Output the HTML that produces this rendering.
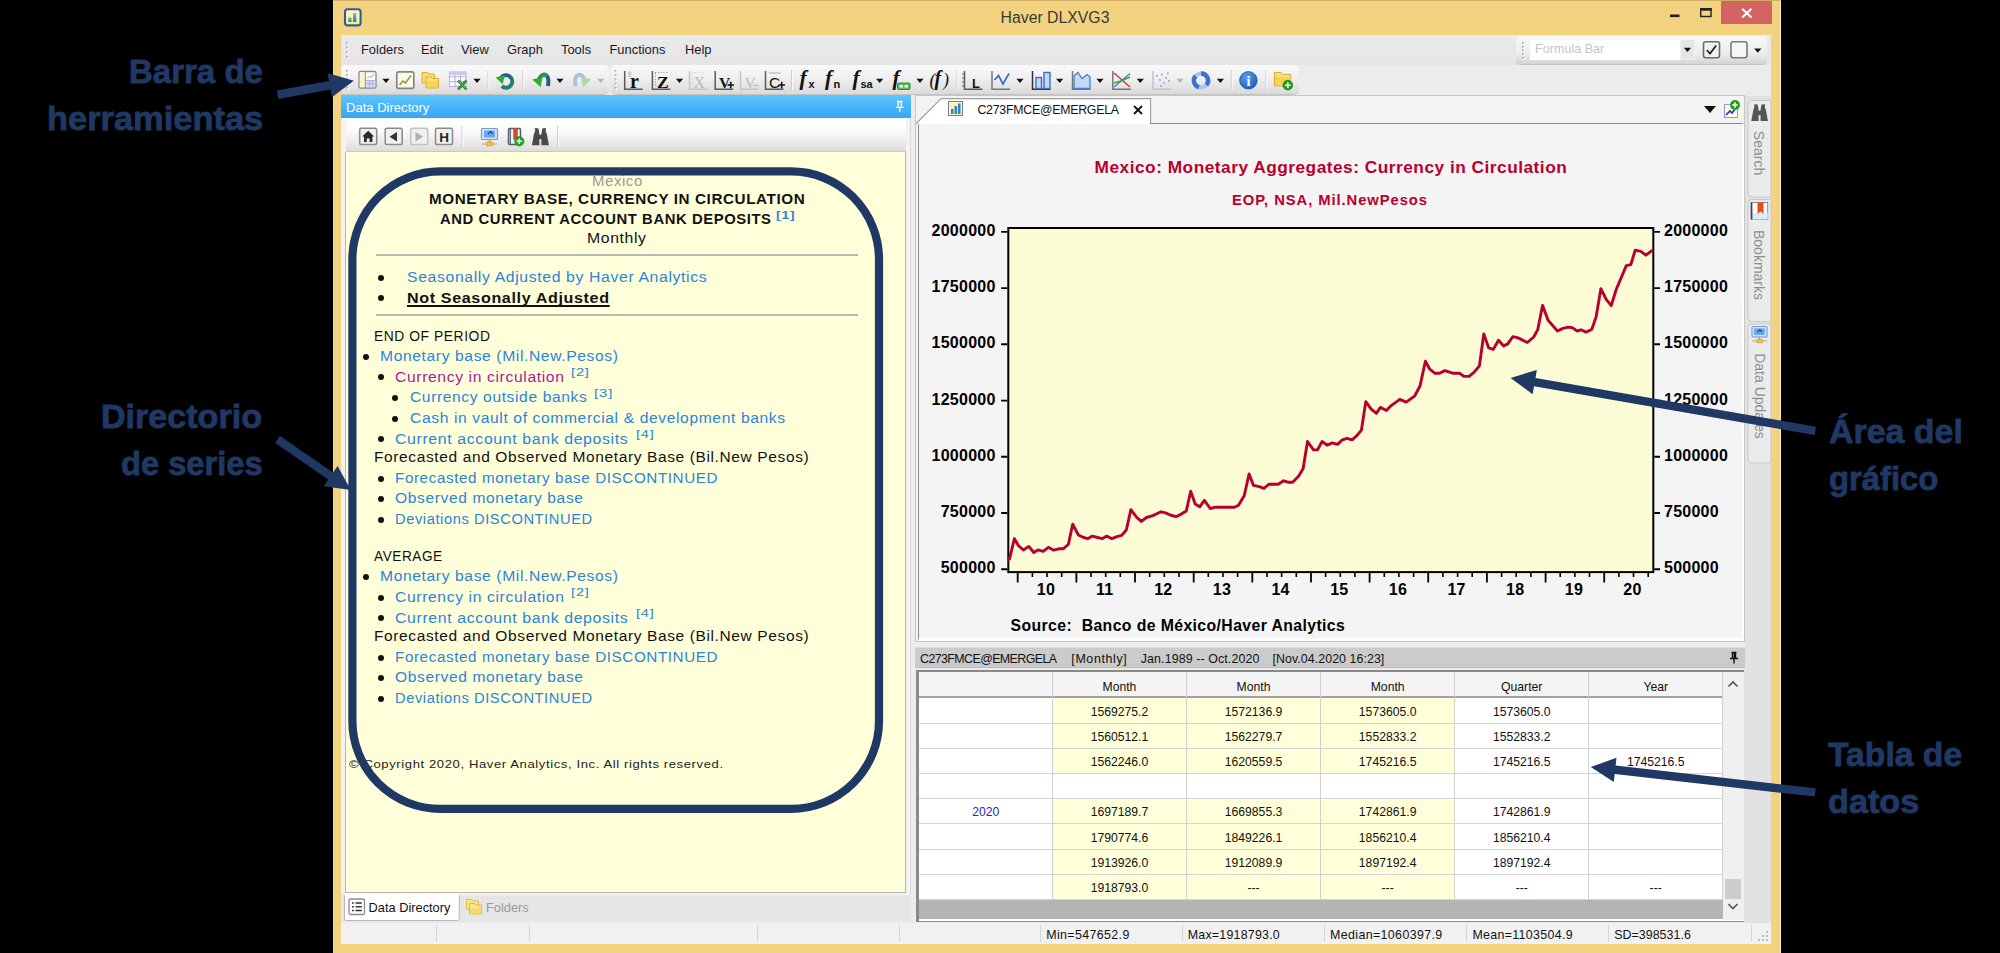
<!DOCTYPE html>
<html>
<head>
<meta charset="utf-8">
<title>Haver DLXVG3</title>
<style>
:root{ --margin:#000000; --navy:#1f3864; --win:#f3d37f; }
*{box-sizing:border-box;margin:0;padding:0}
html,body{width:2000px;height:953px;overflow:hidden;background:var(--margin);}
body{font-family:"Liberation Sans",sans-serif;font-size:12.5px;color:#000;position:relative}
.abs{position:absolute}
.t{position:absolute;white-space:nowrap;line-height:1}
/* window */
#win{left:332.8px;top:0;width:1448px;height:953px;background:var(--win);border-top:1px solid #cfb066;border-right:1.2px solid #f6e9c4;border-left:1px solid #f7dc8c}
#client{left:340.8px;top:35.3px;width:1430.4px;height:908.4px;background:#ececec;}
#title{left:333px;top:0;width:1448px;height:36px}
#title .cap{left:0;width:1448px;top:10.2px;text-align:center;font-size:15.8px;color:#3a3a3a;padding-right:4px}
#closebtn{left:1720.7px;top:1px;width:51.4px;height:22.8px;background:#d46363}
/* menu */
#menubar{left:340.8px;top:35.3px;width:1430.4px;height:29.7px;background:linear-gradient(#ebebeb,#e4e4e4)}
.menu{top:43.6px;font-size:12.9px;color:#1a1a1a}
/* toolbar */
.tb{background:linear-gradient(#fafafa 0%,#f0f0f0 45%,#dadada 100%);border-bottom:1px solid #c4c4c4}
#tb1{left:341px;top:65px;width:268px;height:30px;border-radius:0 5px 5px 0}
#tb2{left:611px;top:65px;width:688px;height:30px;border-radius:5px}
#fbar{left:1516px;top:36px;width:251px;height:29px;border-radius:5px;background:linear-gradient(#f8f8f8 0%,#eeeeee 60%,#d4d4d4 100%);border-bottom:1px solid #c0c0c0}
#finput{left:1530px;top:40px;width:165px;height:20px;background:#fff}
/* left panel */
#ddhead{left:341px;top:95px;width:570px;height:23px;background:linear-gradient(#5cc6fb 0%,#49b4f8 50%,#3da5f2 100%)}
#ddhead .t{left:5px;top:5.6px;color:#fff;font-size:13.05px}
#ddtool{left:346px;top:119px;width:560px;height:33px;background:linear-gradient(#ffffff 0%,#fafafa 40%,#dcdcdc 100%);border-bottom:1px solid #c8c8c8}
#ddbody{left:345px;top:152px;width:560.6px;height:741px;background:#ffffd9;border-left:1.2px solid #b6b6b6;border-right:1.4px solid #b6b6b6;border-bottom:1.6px solid #b6b6b6}
#ddframe{left:341px;top:118px;width:570px;height:777px;background:#f2f2f2;border-right:1.6px solid #dadada}
#ddtabs{left:341px;top:895px;width:570px;height:27px;background:#e6e6e6}
/* status */
#status{left:341px;top:923px;width:1430px;height:21px;background:#f1f1f1}
.ssep{top:925px;width:1px;height:17px;background:#d6d6d6}
.stxt{top:929px;font-size:12.4px;color:#111}

.ct{color:#b8002e;font-weight:bold}
.yl{font-weight:bold;font-size:16px;color:#000;letter-spacing:.25px}
.cell{text-align:center;font-size:12.2px;color:#111}
.lp{letter-spacing:0.55px;transform-origin:0 50%}
.bul{width:6px;height:6px;border-radius:50%;background:#111}
.an{font-size:33.6px;font-weight:700;color:#1f3864;transform-origin:0 50%;-webkit-text-stroke:0.85px #1f3864}
.vt{font-size:14px;color:#8e8e8e;transform:rotate(90deg);transform-origin:50% 50%;text-align:center}
</style>
</head>
<body>
<div id="win" class="abs"></div>
<div id="title" class="abs"><div class="t cap">Haver DLXVG3</div></div>
<div id="closebtn" class="abs"></div>
<div id="client" class="abs"></div>
<div id="menubar" class="abs"></div>
<div class="t menu" style="left:361px">Folders</div>
<div class="t menu" style="left:421px">Edit</div>
<div class="t menu" style="left:461px">View</div>
<div class="t menu" style="left:507px">Graph</div>
<div class="t menu" style="left:561px">Tools</div>
<div class="t menu" style="left:609.5px">Functions</div>
<div class="t menu" style="left:685px">Help</div>
<div id="tb1" class="abs tb"></div>
<div id="tb2" class="abs tb"></div>
<div id="fbar" class="abs"></div>
<div id="finput" class="abs"></div>
<div class="t" style="left:1535px;top:43px;font-size:12.6px;color:#c9c4c6">Formula Bar</div>

<div id="ddframe" class="abs"></div>
<div id="ddhead" class="abs"><div class="t">Data Directory</div></div>
<div id="ddtool" class="abs"></div>
<div id="ddbody" class="abs"></div>
<!--LEFT-->
<div class="t lp" style="left:591.6px;top:173.7px;font-size:14px;font-weight:400;color:#9a9a9a;transform:scaleX(1.0657);">Mexico</div>
<div class="t lp" style="left:428.9px;top:191.9px;font-size:14px;font-weight:700;color:#111111;transform:scaleX(1.0875);">MONETARY BASE, CURRENCY IN CIRCULATION</div>
<div class="t lp" style="left:439.5px;top:212.3px;font-size:14px;font-weight:700;color:#111111;transform:scaleX(1.0587);">AND CURRENT ACCOUNT BANK DEPOSITS</div>
<div class="t lp" style="left:586.5px;top:231.2px;font-size:14px;font-weight:400;color:#111111;transform:scaleX(1.1276);">Monthly</div>
<div class="t lp" style="left:407.0px;top:270.1px;font-size:14px;font-weight:400;color:#2b84dc;transform:scaleX(1.1285);">Seasonally Adjusted by Haver Analytics</div>
<div class="t lp" style="left:407.0px;top:290.5px;font-size:14px;font-weight:700;color:#111111;transform:scaleX(1.1495);text-decoration:underline;text-underline-offset:2px;text-decoration-thickness:1.5px;text-decoration-skip-ink:none;">Not Seasonally Adjusted</div>
<div class="t lp" style="left:373.5px;top:328.5px;font-size:14px;font-weight:400;color:#111111;transform:scaleX(0.9901);">END OF PERIOD</div>
<div class="t lp" style="left:380.2px;top:349.2px;font-size:14px;font-weight:400;color:#2b84dc;transform:scaleX(1.1168);">Monetary base (Mil.New.Pesos)</div>
<div class="t lp" style="left:395.4px;top:369.6px;font-size:14px;font-weight:400;color:#a61aa0;transform:scaleX(1.1215);">Currency in circulation</div>
<div class="t lp" style="left:410.3px;top:390.3px;font-size:14px;font-weight:400;color:#2b84dc;transform:scaleX(1.1139);">Currency outside banks</div>
<div class="t lp" style="left:410.3px;top:411.0px;font-size:14px;font-weight:400;color:#2b84dc;transform:scaleX(1.1171);">Cash in vault of commercial &amp; development banks</div>
<div class="t lp" style="left:395.4px;top:431.7px;font-size:14px;font-weight:400;color:#2b84dc;transform:scaleX(1.1335);">Current account bank deposits</div>
<div class="t lp" style="left:373.5px;top:449.7px;font-size:14px;font-weight:400;color:#111111;transform:scaleX(1.1089);">Forecasted and Observed Monetary Base (Bil.New Pesos)</div>
<div class="t lp" style="left:395.4px;top:471.0px;font-size:14px;font-weight:400;color:#2b84dc;transform:scaleX(1.0867);">Forecasted monetary base DISCONTINUED</div>
<div class="t lp" style="left:395.4px;top:491.4px;font-size:14px;font-weight:400;color:#2b84dc;transform:scaleX(1.1141);">Observed monetary base</div>
<div class="t lp" style="left:395.4px;top:512.1px;font-size:14px;font-weight:400;color:#2b84dc;transform:scaleX(1.0489);">Deviations DISCONTINUED</div>
<div class="t lp" style="left:373.5px;top:548.9px;font-size:14px;font-weight:400;color:#111111;transform:scaleX(0.9748);">AVERAGE</div>
<div class="t lp" style="left:380.2px;top:569.3px;font-size:14px;font-weight:400;color:#2b84dc;transform:scaleX(1.1168);">Monetary base (Mil.New.Pesos)</div>
<div class="t lp" style="left:395.4px;top:590.0px;font-size:14px;font-weight:400;color:#2b84dc;transform:scaleX(1.1215);">Currency in circulation</div>
<div class="t lp" style="left:395.4px;top:610.7px;font-size:14px;font-weight:400;color:#2b84dc;transform:scaleX(1.1335);">Current account bank deposits</div>
<div class="t lp" style="left:373.5px;top:629.2px;font-size:14px;font-weight:400;color:#111111;transform:scaleX(1.1089);">Forecasted and Observed Monetary Base (Bil.New Pesos)</div>
<div class="t lp" style="left:395.4px;top:649.9px;font-size:14px;font-weight:400;color:#2b84dc;transform:scaleX(1.0867);">Forecasted monetary base DISCONTINUED</div>
<div class="t lp" style="left:395.4px;top:670.3px;font-size:14px;font-weight:400;color:#2b84dc;transform:scaleX(1.1141);">Observed monetary base</div>
<div class="t lp" style="left:395.4px;top:691.0px;font-size:14px;font-weight:400;color:#2b84dc;transform:scaleX(1.0489);">Deviations DISCONTINUED</div>
<div class="t lp" style="left:349.0px;top:758.7px;font-size:11.8px;font-weight:400;color:#222;transform:scaleX(1.1060);">© Copyright 2020, Haver Analytics, Inc. All rights reserved.</div>
<div class="t lp" style="left:776.0px;top:209.8px;font-size:10.5px;font-weight:700;letter-spacing:.6px;color:#2b84dc;transform:scaleX(1.3176)">[1]</div>
<div class="t lp" style="left:571.3px;top:367.0px;font-size:10.5px;font-weight:400;letter-spacing:.6px;color:#2b84dc;transform:scaleX(1.3893)">[2]</div>
<div class="t lp" style="left:594.0px;top:387.7px;font-size:10.5px;font-weight:400;letter-spacing:.6px;color:#2b84dc;transform:scaleX(1.4203)">[3]</div>
<div class="t lp" style="left:635.6px;top:429.1px;font-size:10.5px;font-weight:400;letter-spacing:.6px;color:#2b84dc;transform:scaleX(1.3815)">[4]</div>
<div class="t lp" style="left:571.3px;top:587.4px;font-size:10.5px;font-weight:400;letter-spacing:.6px;color:#2b84dc;transform:scaleX(1.3893)">[2]</div>
<div class="t lp" style="left:635.6px;top:608.1px;font-size:10.5px;font-weight:400;letter-spacing:.6px;color:#2b84dc;transform:scaleX(1.3815)">[4]</div>
<div class="abs bul" style="left:378.0px;top:274.6px"></div>
<div class="abs bul" style="left:378.0px;top:295.2px"></div>
<div class="abs bul" style="left:362.9px;top:353.8px"></div>
<div class="abs bul" style="left:378.1px;top:374.2px"></div>
<div class="abs bul" style="left:392.4px;top:394.9px"></div>
<div class="abs bul" style="left:392.4px;top:415.6px"></div>
<div class="abs bul" style="left:378.1px;top:436.3px"></div>
<div class="abs bul" style="left:378.1px;top:475.6px"></div>
<div class="abs bul" style="left:378.1px;top:496.0px"></div>
<div class="abs bul" style="left:378.1px;top:516.7px"></div>
<div class="abs bul" style="left:362.9px;top:573.9px"></div>
<div class="abs bul" style="left:378.1px;top:594.6px"></div>
<div class="abs bul" style="left:378.1px;top:615.3px"></div>
<div class="abs bul" style="left:378.1px;top:654.5px"></div>
<div class="abs bul" style="left:378.1px;top:674.9px"></div>
<div class="abs bul" style="left:378.1px;top:695.6px"></div>
<div class="abs" style="left:375.6px;top:254.2px;width:482.2px;height:2px;background:#b7b7b3"></div>
<div class="abs" style="left:375.6px;top:313.9px;width:482.2px;height:2px;background:#b7b7b3"></div>
<!--/LEFT-->
<div id="ddtabs" class="abs"></div>

<div id="status" class="abs"></div>
<!--STATUS-->
<div class="abs ssep" style="left:436.0px"></div>
<div class="abs ssep" style="left:528.6px"></div>
<div class="abs ssep" style="left:756.5px"></div>
<div class="abs ssep" style="left:898.6px"></div>
<div class="abs ssep" style="left:1040.4px"></div>
<div class="abs ssep" style="left:1182.2px"></div>
<div class="abs ssep" style="left:1324.0px"></div>
<div class="abs ssep" style="left:1466.0px"></div>
<div class="abs ssep" style="left:1608.0px"></div>
<div class="abs ssep" style="left:1750.7px"></div>
<div class="t " style="left:1046.2px;top:928.7px;font-size:12.4px;font-weight:400;color:#111;letter-spacing:0.383px">Min=547652.9</div>
<div class="t " style="left:1187.8px;top:928.7px;font-size:12.4px;font-weight:400;color:#111;letter-spacing:0.223px">Max=1918793.0</div>
<div class="t " style="left:1330.0px;top:928.7px;font-size:12.4px;font-weight:400;color:#111;letter-spacing:0.383px">Median=1060397.9</div>
<div class="t " style="left:1472.4px;top:928.7px;font-size:12.4px;font-weight:400;color:#111;letter-spacing:0.331px">Mean=1103504.9</div>
<div class="t " style="left:1614.2px;top:928.7px;font-size:12.4px;font-weight:400;color:#111;letter-spacing:0.046px">SD=398531.6</div>
<!--/STATUS-->
<!--RIGHT-->
<div class="abs" style="left:915.4px;top:94.8px;width:829.6px;height:547.4px;background:#f3f3f3;border:1px solid #c6c6c6"></div>
<div class="abs" style="left:917.6px;top:122.7px;width:826.2px;height:518.3px;background:#f4f4f4;border-top:1.7px solid #8a8a8a;border-left:1.6px solid #8a8a8a;border-right:2px solid #fdfdfd;border-bottom:3.2px solid #fdfdfd"></div>
<svg class="abs" style="left:0;top:0" width="2000" height="953" viewBox="0 0 2000 953">
<path d="M916.8 123 L941 98.6 L1150.6 98.6 L1150.6 123 Z" fill="#ffffff" stroke="#9f9f9f" stroke-width="1.1"/>
<rect x="918.2" y="122" width="231.8" height="2.4" fill="#ffffff"/>
<rect x="948.5" y="101.5" width="14" height="14" fill="#fdf6b0" stroke="#6b7fa8" stroke-width="1"/>
<rect x="951" y="109" width="2.5" height="5" fill="#2f7fd0"/><rect x="954.5" y="106" width="2.5" height="8" fill="#2f7fd0"/><rect x="958" y="103.5" width="2.5" height="10.5" fill="#2f7fd0"/>
<path d="M1134 106 L1142 114 M1142 106 L1134 114" stroke="#111" stroke-width="1.8" fill="none"/>
<path d="M1704 106 L1716 106 L1710 113 Z" fill="#111"/>
<rect x="1724.5" y="104.5" width="13" height="13" fill="#fbfbe8" stroke="#8aa0c8" stroke-width="1"/>
<path d="M1726 115 L1730 111 L1732 113 L1736 108" stroke="#3a22c0" stroke-width="1.6" fill="none"/>
<circle cx="1735" cy="105" r="5" fill="#1fa11f"/><path d="M1732.3 105 H1737.7 M1735 102.3 V107.7" stroke="#fff" stroke-width="1.5"/>
<rect x="1008.3" y="228" width="645" height="344.1" fill="#fbfbd6" stroke="#000" stroke-width="2"/>
<path d="M1001.2 231.9 H1007.3 M1654.3 231.9 H1660 " stroke="#000" stroke-width="1.9"/>
<path d="M1001.2 288.1 H1007.3 M1654.3 288.1 H1660 " stroke="#000" stroke-width="1.9"/>
<path d="M1001.2 344.3 H1007.3 M1654.3 344.3 H1660 " stroke="#000" stroke-width="1.9"/>
<path d="M1001.2 400.6 H1007.3 M1654.3 400.6 H1660 " stroke="#000" stroke-width="1.9"/>
<path d="M1001.2 456.8 H1007.3 M1654.3 456.8 H1660 " stroke="#000" stroke-width="1.9"/>
<path d="M1001.2 513.0 H1007.3 M1654.3 513.0 H1660 " stroke="#000" stroke-width="1.9"/>
<path d="M1001.2 569.2 H1007.3 M1654.3 569.2 H1660 " stroke="#000" stroke-width="1.9"/>
<path d="M1017.7 573 V582.5" stroke="#000" stroke-width="1.8"/>
<path d="M1032.4 573 V577" stroke="#000" stroke-width="1.6"/>
<path d="M1047.0 573 V577" stroke="#000" stroke-width="1.6"/>
<path d="M1061.7 573 V577" stroke="#000" stroke-width="1.6"/>
<path d="M1076.4 573 V582.5" stroke="#000" stroke-width="1.8"/>
<path d="M1091.0 573 V577" stroke="#000" stroke-width="1.6"/>
<path d="M1105.7 573 V577" stroke="#000" stroke-width="1.6"/>
<path d="M1120.3 573 V577" stroke="#000" stroke-width="1.6"/>
<path d="M1135.0 573 V582.5" stroke="#000" stroke-width="1.8"/>
<path d="M1149.7 573 V577" stroke="#000" stroke-width="1.6"/>
<path d="M1164.3 573 V577" stroke="#000" stroke-width="1.6"/>
<path d="M1179.0 573 V577" stroke="#000" stroke-width="1.6"/>
<path d="M1193.7 573 V582.5" stroke="#000" stroke-width="1.8"/>
<path d="M1208.3 573 V577" stroke="#000" stroke-width="1.6"/>
<path d="M1223.0 573 V577" stroke="#000" stroke-width="1.6"/>
<path d="M1237.6 573 V577" stroke="#000" stroke-width="1.6"/>
<path d="M1252.3 573 V582.5" stroke="#000" stroke-width="1.8"/>
<path d="M1267.0 573 V577" stroke="#000" stroke-width="1.6"/>
<path d="M1281.6 573 V577" stroke="#000" stroke-width="1.6"/>
<path d="M1296.3 573 V577" stroke="#000" stroke-width="1.6"/>
<path d="M1311.0 573 V582.5" stroke="#000" stroke-width="1.8"/>
<path d="M1325.6 573 V577" stroke="#000" stroke-width="1.6"/>
<path d="M1340.3 573 V577" stroke="#000" stroke-width="1.6"/>
<path d="M1354.9 573 V577" stroke="#000" stroke-width="1.6"/>
<path d="M1369.6 573 V582.5" stroke="#000" stroke-width="1.8"/>
<path d="M1384.3 573 V577" stroke="#000" stroke-width="1.6"/>
<path d="M1398.9 573 V577" stroke="#000" stroke-width="1.6"/>
<path d="M1413.6 573 V577" stroke="#000" stroke-width="1.6"/>
<path d="M1428.2 573 V582.5" stroke="#000" stroke-width="1.8"/>
<path d="M1442.9 573 V577" stroke="#000" stroke-width="1.6"/>
<path d="M1457.6 573 V577" stroke="#000" stroke-width="1.6"/>
<path d="M1472.2 573 V577" stroke="#000" stroke-width="1.6"/>
<path d="M1486.9 573 V582.5" stroke="#000" stroke-width="1.8"/>
<path d="M1501.6 573 V577" stroke="#000" stroke-width="1.6"/>
<path d="M1516.2 573 V577" stroke="#000" stroke-width="1.6"/>
<path d="M1530.9 573 V577" stroke="#000" stroke-width="1.6"/>
<path d="M1545.6 573 V582.5" stroke="#000" stroke-width="1.8"/>
<path d="M1560.2 573 V577" stroke="#000" stroke-width="1.6"/>
<path d="M1574.9 573 V577" stroke="#000" stroke-width="1.6"/>
<path d="M1589.5 573 V577" stroke="#000" stroke-width="1.6"/>
<path d="M1604.2 573 V582.5" stroke="#000" stroke-width="1.8"/>
<path d="M1618.9 573 V577" stroke="#000" stroke-width="1.6"/>
<path d="M1633.5 573 V577" stroke="#000" stroke-width="1.6"/>
<path d="M1648.2 573 V577" stroke="#000" stroke-width="1.6"/>
<polyline points="1008.5,559.5 1009.5,558.9 1014.4,538.7 1018.4,545.6 1023.4,550.0 1028.8,546.4 1033.8,552.5 1038.0,549.9 1043.2,551.4 1048.4,547.3 1053.6,550.2 1058.8,548.8 1063.4,548.8 1068.4,544.2 1072.7,524.2 1078.4,535.0 1083.6,537.5 1087.7,538.7 1092.3,536.1 1097.5,537.5 1102.1,538.7 1106.7,536.1 1111.9,538.7 1117.7,536.4 1121.7,535.4 1126.3,530.0 1130.9,509.6 1136.7,517.3 1141.3,521.4 1146.5,517.5 1152.9,515.6 1161.0,511.8 1165.6,512.9 1170.2,515.0 1176.0,516.7 1181.2,514.1 1186.3,511.0 1190.7,491.3 1195.2,503.9 1199.8,506.8 1204.4,500.4 1210.2,508.5 1214.8,507.3 1234.4,507.3 1238.5,505.3 1244.2,495.8 1249.1,473.9 1253.5,485.4 1259.2,486.6 1263.9,488.3 1269.1,484.2 1278.3,484.2 1283.5,480.8 1288.1,482.2 1292.7,482.2 1298.5,476.2 1303.1,468.7 1307.5,441.5 1313.5,449.9 1317.5,449.9 1322.1,441.5 1327.3,445.2 1332.0,442.9 1337.7,444.4 1342.3,439.8 1347.0,438.3 1352.1,439.8 1357.3,435.2 1361.4,430.2 1365.8,401.7 1371.2,409.2 1376.4,413.3 1380.4,407.4 1386.4,410.5 1391.2,405.6 1399.8,399.3 1406.2,402.1 1414.8,395.8 1420.0,386.0 1425.4,361.2 1429.8,369.2 1435.0,373.3 1439.6,373.3 1444.8,370.6 1453.5,373.3 1459.8,373.3 1463.9,376.4 1469.1,376.4 1474.2,372.1 1479.4,365.8 1483.8,334.0 1488.7,347.9 1493.3,349.4 1498.5,340.2 1503.7,345.9 1507.7,343.9 1512.9,336.7 1518.1,337.9 1527.3,342.5 1533.7,337.0 1537.7,329.8 1542.6,305.4 1548.2,320.4 1557.5,331.0 1562.9,328.4 1568.3,327.2 1572.2,327.6 1577.2,331.0 1581.0,329.8 1586.0,332.1 1591.7,329.5 1596.1,316.9 1600.9,288.6 1606.2,299.3 1611.2,305.6 1616.3,289.2 1626.3,265.6 1630.8,264.7 1635.2,250.2 1640.8,251.4 1645.9,255.2 1651.5,250.8" fill="none" stroke="#b8002e" stroke-width="2.9" stroke-linejoin="round" stroke-linecap="round"/>
</svg>
<div class="t " style="left:1094.6px;top:158.8px;font-size:17.3px;font-weight:700;color:#b8002e;letter-spacing:0.497px">Mexico: Monetary Aggregates: Currency in Circulation</div>
<div class="t " style="left:1232.0px;top:193.3px;font-size:14.8px;font-weight:700;color:#b8002e;letter-spacing:0.918px">EOP, NSA, Mil.NewPesos</div>
<div class="t yl" style="left:896px;width:99.6px;text-align:right;top:223.0px">2000000</div>
<div class="t yl" style="left:1664px;top:223.0px">2000000</div>
<div class="t yl" style="left:896px;width:99.6px;text-align:right;top:279.2px">1750000</div>
<div class="t yl" style="left:1664px;top:279.2px">1750000</div>
<div class="t yl" style="left:896px;width:99.6px;text-align:right;top:335.4px">1500000</div>
<div class="t yl" style="left:1664px;top:335.4px">1500000</div>
<div class="t yl" style="left:896px;width:99.6px;text-align:right;top:391.7px">1250000</div>
<div class="t yl" style="left:1664px;top:391.7px">1250000</div>
<div class="t yl" style="left:896px;width:99.6px;text-align:right;top:447.9px">1000000</div>
<div class="t yl" style="left:1664px;top:447.9px">1000000</div>
<div class="t yl" style="left:896px;width:99.6px;text-align:right;top:504.1px">750000</div>
<div class="t yl" style="left:1664px;top:504.1px">750000</div>
<div class="t yl" style="left:896px;width:99.6px;text-align:right;top:560.3px">500000</div>
<div class="t yl" style="left:1664px;top:560.3px">500000</div>
<div class="t yl" style="left:1026.0px;width:40px;text-align:center;top:581.7px">10</div>
<div class="t yl" style="left:1084.7px;width:40px;text-align:center;top:581.7px">11</div>
<div class="t yl" style="left:1143.3px;width:40px;text-align:center;top:581.7px">12</div>
<div class="t yl" style="left:1202.0px;width:40px;text-align:center;top:581.7px">13</div>
<div class="t yl" style="left:1260.6px;width:40px;text-align:center;top:581.7px">14</div>
<div class="t yl" style="left:1319.3px;width:40px;text-align:center;top:581.7px">15</div>
<div class="t yl" style="left:1377.9px;width:40px;text-align:center;top:581.7px">16</div>
<div class="t yl" style="left:1436.6px;width:40px;text-align:center;top:581.7px">17</div>
<div class="t yl" style="left:1495.2px;width:40px;text-align:center;top:581.7px">18</div>
<div class="t yl" style="left:1553.9px;width:40px;text-align:center;top:581.7px">19</div>
<div class="t yl" style="left:1612.5px;width:40px;text-align:center;top:581.7px">20</div>
<div class="t " style="left:1010.5px;top:617.6px;font-size:15.8px;font-weight:700;color:#000;letter-spacing:0.393px">Source:&nbsp; Banco de M&eacute;xico/Haver Analytics</div>
<div class="t " style="left:977.4px;top:104.2px;font-size:12.3px;font-weight:400;color:#111;letter-spacing:-0.216px">C273FMCE@EMERGELA</div>
<div class="abs" style="left:915.4px;top:647px;width:829.6px;height:20.6px;background:#cbcbcb;border-top:1px solid #d9d9d9;border-bottom:1px solid #bdbdbd"></div>
<div class="t " style="left:920.0px;top:653.2px;font-size:12.4px;font-weight:400;color:#111;letter-spacing:-0.573px">C273FMCE@EMERGELA</div>
<div class="t " style="left:1071.3px;top:653.2px;font-size:12.4px;font-weight:400;color:#111;letter-spacing:0.652px">[Monthly]</div>
<div class="t " style="left:1140.8px;top:653.2px;font-size:12.4px;font-weight:400;color:#111;letter-spacing:0.110px">Jan.1989 -- Oct.2020</div>
<div class="t " style="left:1272.5px;top:653.2px;font-size:12.4px;font-weight:400;color:#111;letter-spacing:0.062px">[Nov.04.2020 16:23]</div>
<div class="abs" style="left:916.2px;top:670.4px;width:828.3px;height:251.6px;background:#8a8a8a"></div>
<div class="abs" style="left:918.5px;top:672.4px;width:825.5px;height:248.6px;background:#ffffff"></div><div class="abs" style="left:1743.5px;top:670px;width:1px;height:252px;background:#e0e0e0"></div>
<div class="abs" style="left:919px;top:899px;width:804px;height:20px;background:#b4b4b4"></div>
<div class="abs" style="left:1723px;top:672px;width:21px;height:248px;background:#f0f0f0"></div>
<div class="abs" style="left:1725px;top:879px;width:16px;height:20px;background:#cdcdcd"></div>
<div class="abs" style="left:919px;top:672px;width:803.6px;height:26.3px;background:#f4f4f4;border-bottom:2px solid #a2a2a2"></div>
<div class="abs" style="left:1052.4px;top:697.6px;width:402.3px;height:25.5px;background:#ffffd9"></div>
<div class="abs" style="left:1052.4px;top:723.1px;width:402.3px;height:25.2px;background:#ffffd9"></div>
<div class="abs" style="left:1052.4px;top:748.3px;width:402.3px;height:25.2px;background:#ffffd9"></div>
<div class="abs" style="left:1052.4px;top:798.6px;width:402.3px;height:25.2px;background:#ffffd9"></div>
<div class="abs" style="left:1052.4px;top:823.8px;width:402.3px;height:25.5px;background:#ffffd9"></div>
<div class="abs" style="left:1052.4px;top:849.3px;width:402.3px;height:25.2px;background:#ffffd9"></div>
<div class="abs" style="left:1052.4px;top:874.5px;width:402.3px;height:25.1px;background:#ffffd9"></div>
<div class="abs" style="left:919px;top:722.5px;width:803.6px;height:1.2px;background:#d4d4d4"></div>
<div class="abs" style="left:919px;top:747.7px;width:803.6px;height:1.2px;background:#d4d4d4"></div>
<div class="abs" style="left:919px;top:772.9px;width:803.6px;height:1.2px;background:#d4d4d4"></div>
<div class="abs" style="left:919px;top:798.0px;width:803.6px;height:1.2px;background:#d4d4d4"></div>
<div class="abs" style="left:919px;top:823.2px;width:803.6px;height:1.2px;background:#d4d4d4"></div>
<div class="abs" style="left:919px;top:848.7px;width:803.6px;height:1.2px;background:#d4d4d4"></div>
<div class="abs" style="left:919px;top:873.9px;width:803.6px;height:1.2px;background:#d4d4d4"></div>
<div class="abs" style="left:919px;top:899.0px;width:803.6px;height:1.2px;background:#d4d4d4"></div>
<div class="abs" style="left:1051.8px;top:672px;width:1.2px;height:227.6px;background:#d0d0d0"></div>
<div class="abs" style="left:1185.9px;top:672px;width:1.2px;height:227.6px;background:#d0d0d0"></div>
<div class="abs" style="left:1320.0px;top:672px;width:1.2px;height:227.6px;background:#d0d0d0"></div>
<div class="abs" style="left:1454.1px;top:672px;width:1.2px;height:227.6px;background:#d0d0d0"></div>
<div class="abs" style="left:1588.2px;top:672px;width:1.2px;height:227.6px;background:#d0d0d0"></div>
<div class="abs" style="left:1722.0px;top:672px;width:1.2px;height:227.6px;background:#d0d0d0"></div>
<div class="t cell" style="left:1052.4px;width:134.1px;top:680.8px">Month</div>
<div class="t cell" style="left:1186.5px;width:134.1px;top:680.8px">Month</div>
<div class="t cell" style="left:1320.6px;width:134.1px;top:680.8px">Month</div>
<div class="t cell" style="left:1454.7px;width:134.1px;top:680.8px">Quarter</div>
<div class="t cell" style="left:1588.8px;width:133.8px;top:680.8px">Year</div>
<div class="t cell" style="left:1052.4px;width:134.1px;top:705.5px">1569275.2</div>
<div class="t cell" style="left:1186.5px;width:134.1px;top:705.5px">1572136.9</div>
<div class="t cell" style="left:1320.6px;width:134.1px;top:705.5px">1573605.0</div>
<div class="t cell" style="left:1454.7px;width:134.1px;top:705.5px">1573605.0</div>
<div class="t cell" style="left:1052.4px;width:134.1px;top:730.8px">1560512.1</div>
<div class="t cell" style="left:1186.5px;width:134.1px;top:730.8px">1562279.7</div>
<div class="t cell" style="left:1320.6px;width:134.1px;top:730.8px">1552833.2</div>
<div class="t cell" style="left:1454.7px;width:134.1px;top:730.8px">1552833.2</div>
<div class="t cell" style="left:1052.4px;width:134.1px;top:756.0px">1562246.0</div>
<div class="t cell" style="left:1186.5px;width:134.1px;top:756.0px">1620559.5</div>
<div class="t cell" style="left:1320.6px;width:134.1px;top:756.0px">1745216.5</div>
<div class="t cell" style="left:1454.7px;width:134.1px;top:756.0px">1745216.5</div>
<div class="t cell" style="left:1588.8px;width:133.8px;top:756.0px">1745216.5</div>
<div class="t cell" style="left:919.0px;width:133.4px;top:806.3px;color:#2626c8">2020</div>
<div class="t cell" style="left:1052.4px;width:134.1px;top:806.3px">1697189.7</div>
<div class="t cell" style="left:1186.5px;width:134.1px;top:806.3px">1669855.3</div>
<div class="t cell" style="left:1320.6px;width:134.1px;top:806.3px">1742861.9</div>
<div class="t cell" style="left:1454.7px;width:134.1px;top:806.3px">1742861.9</div>
<div class="t cell" style="left:1052.4px;width:134.1px;top:831.6px">1790774.6</div>
<div class="t cell" style="left:1186.5px;width:134.1px;top:831.6px">1849226.1</div>
<div class="t cell" style="left:1320.6px;width:134.1px;top:831.6px">1856210.4</div>
<div class="t cell" style="left:1454.7px;width:134.1px;top:831.6px">1856210.4</div>
<div class="t cell" style="left:1052.4px;width:134.1px;top:857.0px">1913926.0</div>
<div class="t cell" style="left:1186.5px;width:134.1px;top:857.0px">1912089.9</div>
<div class="t cell" style="left:1320.6px;width:134.1px;top:857.0px">1897192.4</div>
<div class="t cell" style="left:1454.7px;width:134.1px;top:857.0px">1897192.4</div>
<div class="t cell" style="left:1052.4px;width:134.1px;top:882.1px">1918793.0</div>
<div class="t cell" style="left:1186.5px;width:134.1px;top:882.1px">---</div>
<div class="t cell" style="left:1320.6px;width:134.1px;top:882.1px">---</div>
<div class="t cell" style="left:1454.7px;width:134.1px;top:882.1px">---</div>
<div class="t cell" style="left:1588.8px;width:133.8px;top:882.1px">---</div>
<svg class="abs" style="left:1723px;top:672px" width="21" height="248"><path d="M5.5 14.5 L10 10 L14.5 14.5" stroke="#555" stroke-width="1.6" fill="none"/><path d="M5.5 232 L10 236.5 L14.5 232" stroke="#555" stroke-width="1.6" fill="none"/></svg>
<svg class="abs" style="left:1728px;top:651px" width="12" height="14"><path d="M3.5 1.5 H8.5 M4.5 1.5 V7 M7.5 1.5 V7 M2 7.5 H10 M6 8 V12.5" stroke="#111" stroke-width="1.4" fill="none"/><rect x="5.6" y="2" width="2.4" height="5" fill="#111"/></svg>
<!--/RIGHT-->
<!--ICONS-->
<svg class="abs" style="left:0;top:0" width="2000" height="953" viewBox="0 0 2000 953"><rect x="346.0" y="42.0" width="2" height="2" fill="#a8a8a8"/><rect x="347.0" y="43.0" width="1.6" height="1.6" fill="#fff"/>
<rect x="346.0" y="46.7" width="2" height="2" fill="#a8a8a8"/><rect x="347.0" y="47.7" width="1.6" height="1.6" fill="#fff"/>
<rect x="346.0" y="51.3" width="2" height="2" fill="#a8a8a8"/><rect x="347.0" y="52.3" width="1.6" height="1.6" fill="#fff"/>
<rect x="346.0" y="56.0" width="2" height="2" fill="#a8a8a8"/><rect x="347.0" y="57.0" width="1.6" height="1.6" fill="#fff"/>
<rect x="346.0" y="70.0" width="2" height="2" fill="#a8a8a8"/><rect x="347.0" y="71.0" width="1.6" height="1.6" fill="#fff"/>
<rect x="346.0" y="74.2" width="2" height="2" fill="#a8a8a8"/><rect x="347.0" y="75.2" width="1.6" height="1.6" fill="#fff"/>
<rect x="346.0" y="78.5" width="2" height="2" fill="#a8a8a8"/><rect x="347.0" y="79.5" width="1.6" height="1.6" fill="#fff"/>
<rect x="346.0" y="82.8" width="2" height="2" fill="#a8a8a8"/><rect x="347.0" y="83.8" width="1.6" height="1.6" fill="#fff"/>
<rect x="346.0" y="87.0" width="2" height="2" fill="#a8a8a8"/><rect x="347.0" y="88.0" width="1.6" height="1.6" fill="#fff"/>
<rect x="614.5" y="70.0" width="2" height="2" fill="#a8a8a8"/><rect x="615.5" y="71.0" width="1.6" height="1.6" fill="#fff"/>
<rect x="614.5" y="74.2" width="2" height="2" fill="#a8a8a8"/><rect x="615.5" y="75.2" width="1.6" height="1.6" fill="#fff"/>
<rect x="614.5" y="78.5" width="2" height="2" fill="#a8a8a8"/><rect x="615.5" y="79.5" width="1.6" height="1.6" fill="#fff"/>
<rect x="614.5" y="82.8" width="2" height="2" fill="#a8a8a8"/><rect x="615.5" y="83.8" width="1.6" height="1.6" fill="#fff"/>
<rect x="614.5" y="87.0" width="2" height="2" fill="#a8a8a8"/><rect x="615.5" y="88.0" width="1.6" height="1.6" fill="#fff"/>
<rect x="1522.0" y="42.0" width="2" height="2" fill="#a8a8a8"/><rect x="1523.0" y="43.0" width="1.6" height="1.6" fill="#fff"/>
<rect x="1522.0" y="45.8" width="2" height="2" fill="#a8a8a8"/><rect x="1523.0" y="46.8" width="1.6" height="1.6" fill="#fff"/>
<rect x="1522.0" y="49.5" width="2" height="2" fill="#a8a8a8"/><rect x="1523.0" y="50.5" width="1.6" height="1.6" fill="#fff"/>
<rect x="1522.0" y="53.2" width="2" height="2" fill="#a8a8a8"/><rect x="1523.0" y="54.2" width="1.6" height="1.6" fill="#fff"/>
<rect x="1522.0" y="57.0" width="2" height="2" fill="#a8a8a8"/><rect x="1523.0" y="58.0" width="1.6" height="1.6" fill="#fff"/>
<rect x="359" y="71.5" width="17" height="16.5" rx="1.5" fill="#fff" stroke="#8a8a8a" stroke-width="1.4"/>
<rect x="359.8" y="72.3" width="5" height="15" fill="#fbf5c6"/><path d="M365.3 72 V88" stroke="#8a8a8a" stroke-width="1"/>
<path d="M367 78.5 L369.5 76 L371 77.5 L374 74" stroke="#9a9a9a" stroke-width="1" fill="none"/>
<rect x="366.2" y="80.5" width="9" height="6.8" fill="#dedcf8"/><path d="M366 83.8 H375.5 M369.3 80.5 V87.5 M372.4 80.5 V87.5 M366 80.5 H375.5" stroke="#a9a6e6" stroke-width=".9"/>
<path d="M382.4 78.8 H389.6 L386.0 83.0 Z" fill="#111"/>
<rect x="396.8" y="71.8" width="17" height="16.5" rx="1.8" fill="#fbfbe4" stroke="#858585" stroke-width="1.7"/>
<path d="M399.5 85 L403 81 L405.5 83 L411 75.5" stroke="#8e8c4a" stroke-width="1.3" fill="none"/>
<path d="M422 72.5 h5.5 l1.5 1.5 h5.5 v9 h-12.5 z" fill="#f7dc6a" stroke="#d9ae2c" stroke-width="1"/>
<path d="M426 77 h5 l1.5 1.5 h6 v9.5 h-12.5 z" fill="#f9e27c" stroke="#d9ae2c" stroke-width="1"/>
<path d="M426.5 81 h11.5 v6.5 h-11.5 z" fill="#f4cf45" opacity=".75"/>
<rect x="449.5" y="72" width="16.5" height="14.5" fill="#fdfdff" stroke="#b0aee0" stroke-width="1"/>
<path d="M449.5 76.8 H466 M449.5 81.6 H466 M455 72 V86.5 M460.5 72 V86.5" stroke="#b0aee0" stroke-width="1"/>
<rect x="449.5" y="72" width="16.5" height="3" fill="#c9c7ee"/>
<path d="M458 80.5 L466.5 89.5 M466.5 80.5 L458 89.5" stroke="#3b8a3b" stroke-width="2.6"/>
<path d="M459 81.5 L465.5 88.5" stroke="#7cc47c" stroke-width=".8"/>
<path d="M473.4 78.8 H480.6 L477.0 83.0 Z" fill="#111"/>
<path d="M488.0 70 V90" stroke="#cdcdcd" stroke-width="1"/><path d="M489.0 70 V90" stroke="#fbfbfb" stroke-width="1"/>
<defs><linearGradient id="gr1" x1="0" y1="0" x2="1" y2="1"><stop offset="0" stop-color="#1b4f9a"/><stop offset="1" stop-color="#1f8f5a"/></linearGradient></defs>
<path d="M500.4 78.5 A6.3 6.3 0 1 1 501.8 86.2" fill="none" stroke="url(#gr1)" stroke-width="3.9"/>
<path d="M495.6 77.4 L505 75 L502.6 84.2 Z" fill="#2fae2f"/>
<path d="M522.7 70 V90" stroke="#cdcdcd" stroke-width="1"/><path d="M523.7 70 V90" stroke="#fbfbfb" stroke-width="1"/>
<path d="M539 80 C541 71.8 550.5 72.5 548 86" fill="none" stroke="#1f5f86" stroke-width="4"/>
<path d="M532.3 79.6 L542.6 76.8 L540.6 87.2 Z" fill="#35ad35"/>
<path d="M540.5 77.5 C542 74 546 73.5 547 76" fill="none" stroke="#2e9a4a" stroke-width="3.6"/>
<path d="M556.4 78.8 H563.6 L560.0 83.0 Z" fill="#111"/>
<path d="M584.5 80 C582.5 71.8 573 72.5 575.5 86" fill="none" stroke="#a8c4d2" stroke-width="4"/>
<path d="M591.2 79.6 L580.9 76.8 L582.9 87.2 Z" fill="#a9dba9"/>
<path d="M597.1 78.8 H604.3 L600.7 83.0 Z" fill="#b5b5b5"/>
<path d="M624.7 71 V89.3 H642.7" fill="none" stroke="#5a5a5a" stroke-width="1.5"/>
<rect x="628" y="71.5" width="3.5" height="5.5" fill="#cfcfcf"/>
<text x="630.0" y="88.0" font-family="Liberation Serif" font-size="20" font-weight="700" font-style="normal" fill="#111" text-anchor="start">r</text>
<path d="M652.4 71 V89.3 H670.4" fill="none" stroke="#5a5a5a" stroke-width="1.5"/>
<path d="M655 72.5 H668 M655.5 73 V87" stroke="#999" stroke-width="1" stroke-dasharray="1.2 1.6" fill="none"/>
<text x="657.0" y="88.0" font-family="Liberation Serif" font-size="17.5" font-weight="700" font-style="normal" fill="#111" text-anchor="start">Z</text>
<path d="M675.9 78.8 H683.1 L679.5 83.0 Z" fill="#111"/>
<path d="M689.5 71 V89.3 H707.5" fill="none" stroke="#c4c4c4" stroke-width="1.5"/>
<path d="M692 72.5 H705 M692.5 73 V87" stroke="#d0d0d0" stroke-width="1" stroke-dasharray="1.2 1.6" fill="none"/>
<text x="693.5" y="88.0" font-family="Liberation Serif" font-size="16" font-weight="400" font-style="normal" fill="#bdbdbd" text-anchor="start">X</text>
<path d="M715.2 71 V89.3 H733.2" fill="none" stroke="#5a5a5a" stroke-width="1.5"/>
<text x="719.0" y="88.3" font-family="Liberation Serif" font-size="15.5" font-weight="700" font-style="normal" fill="#111" text-anchor="start">V</text>
<path d="M727.5 85 H734 M730.7 81.8 V88.2" stroke="#111" stroke-width="1.6"/>
<path d="M740.5 71 V89.3 H758.5" fill="none" stroke="#c4c4c4" stroke-width="1.5"/>
<text x="744.5" y="88.3" font-family="Liberation Serif" font-size="15.5" font-weight="400" font-style="normal" fill="#bdbdbd" text-anchor="start">V</text>
<path d="M753.5 85.5 H758.5" stroke="#bdbdbd" stroke-width="1.4"/>
<path d="M765.5 71 V89.3 H783.5" fill="none" stroke="#5a5a5a" stroke-width="1.5"/>
<path d="M769 73 H781" stroke="#b5b5b5" stroke-width="1.2"/>
<text x="769.0" y="88.3" font-family="Liberation Sans" font-size="15.5" font-weight="400" font-style="normal" fill="#111" text-anchor="start">C</text>
<path d="M778.5 85 H785 M781.7 81.8 V88.2" stroke="#111" stroke-width="1.6"/>
<path d="M791.5 70 V90" stroke="#cdcdcd" stroke-width="1"/><path d="M792.5 70 V90" stroke="#fbfbfb" stroke-width="1"/>
<text x="799.5" y="85.0" font-family="Liberation Serif" font-size="21.5" font-weight="700" font-style="italic" fill="#111" text-anchor="start">f</text>
<text x="808.5" y="88.3" font-family="Liberation Sans" font-size="11" font-weight="700" font-style="normal" fill="#111" text-anchor="start">x</text>
<text x="825.0" y="85.0" font-family="Liberation Serif" font-size="21.5" font-weight="700" font-style="italic" fill="#111" text-anchor="start">f</text>
<text x="833.5" y="88.3" font-family="Liberation Sans" font-size="11" font-weight="700" font-style="normal" fill="#111" text-anchor="start">n</text>
<text x="852.5" y="85.0" font-family="Liberation Serif" font-size="21.5" font-weight="700" font-style="italic" fill="#111" text-anchor="start">f</text>
<text x="860.5" y="88.3" font-family="Liberation Sans" font-size="11" font-weight="700" font-style="normal" fill="#111" text-anchor="start">sa</text>
<path d="M876.1 78.8 H883.3 L879.7 83.0 Z" fill="#111"/>
<text x="892.5" y="84.5" font-family="Liberation Serif" font-size="21.5" font-weight="700" font-style="italic" fill="#111" text-anchor="start">f</text>
<rect x="897.5" y="83" width="12.5" height="6.5" rx="1" fill="#5cb85c" stroke="#2f8f2f" stroke-width="1"/><rect x="899.5" y="85" width="3.5" height="2.5" fill="#e8ffe8"/><rect x="904.5" y="85" width="3.5" height="2.5" fill="#e8ffe8"/>
<path d="M916.4 78.8 H923.6 L920.0 83.0 Z" fill="#111"/>
<text x="929.5" y="86.0" font-family="Liberation Serif" font-size="18" font-weight="400" font-style="italic" fill="#111" text-anchor="start">(</text>
<text x="934.5" y="85.0" font-family="Liberation Serif" font-size="20" font-weight="700" font-style="italic" fill="#111" text-anchor="start">f</text>
<text x="943.0" y="86.0" font-family="Liberation Serif" font-size="18" font-weight="400" font-style="italic" fill="#111" text-anchor="start">)</text>
<path d="M957.0 70 V90" stroke="#cdcdcd" stroke-width="1"/><path d="M958.0 70 V90" stroke="#fbfbfb" stroke-width="1"/>
<path d="M964.5 71 V89.3 H982.5" fill="none" stroke="#5a5a5a" stroke-width="1.5"/>
<path d="M962 74 H964.5 M962 78 H964.5 M962 82 H964.5 M962 86 H964.5" stroke="#5a5a5a" stroke-width="1"/>
<text x="972.0" y="87.5" font-family="Liberation Sans" font-size="13" font-weight="700" font-style="normal" fill="#111" text-anchor="start">L</text>
<path d="M992.0 71 V89.3 H1010.0" fill="none" stroke="#777" stroke-width="1.5"/>
<path d="M994.5 80 L998.5 75.5 L1003 84 L1009 73.5" fill="none" stroke="#2f6fc6" stroke-width="1.7"/>
<path d="M1016.4 78.8 H1023.6 L1020.0 83.0 Z" fill="#111"/>
<path d="M1032.5 71 V89.3 H1050.5" fill="none" stroke="#333" stroke-width="1.5"/>
<rect x="1036" y="77.5" width="5.5" height="11" fill="#c4d7f4" stroke="#3a6fc4" stroke-width="1.4"/><rect x="1044" y="72.5" width="6" height="16" fill="#c4d7f4" stroke="#3a6fc4" stroke-width="1.4"/>
<path d="M1056.1 78.8 H1063.3 L1059.7 83.0 Z" fill="#111"/>
<path d="M1072.5 71 V89.3 H1090.5" fill="none" stroke="#777" stroke-width="1.5"/>
<path d="M1074 88.5 V76 L1078 72.5 L1082 78.5 L1087 74.5 L1090 77 V88.5 Z" fill="#c4d9f6" stroke="#3f7fd4" stroke-width="1.3"/>
<path d="M1096.4 78.8 H1103.6 L1100.0 83.0 Z" fill="#111"/>
<path d="M1112.8 71 V89.3 H1130.8" fill="none" stroke="#777" stroke-width="1.5"/>
<path d="M1114 73 L1130 87" stroke="#d43a3a" stroke-width="1.5"/><path d="M1114 87 L1130 73.5" stroke="#3f7fd4" stroke-width="1.3"/><path d="M1114 83 L1121 81 L1130 77" stroke="#3aa83a" stroke-width="1.4" fill="none"/>
<path d="M1136.7 78.8 H1143.9 L1140.3 83.0 Z" fill="#111"/>
<path d="M1153.0 71 V89.3 H1171.0" fill="none" stroke="#c4c4c4" stroke-width="1.5"/>
<rect x="1156" y="75" width="1.8" height="1.8" fill="#79b9e6"/>
<rect x="1159" y="79" width="1.8" height="1.8" fill="#79b9e6"/>
<rect x="1161" y="73.5" width="1.8" height="1.8" fill="#79b9e6"/>
<rect x="1163" y="82" width="1.8" height="1.8" fill="#79b9e6"/>
<rect x="1165" y="77" width="1.8" height="1.8" fill="#79b9e6"/>
<rect x="1167" y="72.5" width="1.8" height="1.8" fill="#79b9e6"/>
<rect x="1168" y="80" width="1.8" height="1.8" fill="#79b9e6"/>
<rect x="1160" y="85" width="1.8" height="1.8" fill="#79b9e6"/>
<path d="M1176.4 78.8 H1183.6 L1180.0 83.0 Z" fill="#b5b5b5"/>
<circle cx="1201" cy="80.5" r="7" fill="none" stroke="#a9c6f0" stroke-width="4.2"/>
<path d="M1201 73.5 A7 7 0 0 1 1206.5 85" fill="none" stroke="#3b73cf" stroke-width="4.4"/>
<path d="M1195.5 76 A7 7 0 0 0 1199 87.2" fill="none" stroke="#3b73cf" stroke-width="4.4"/>
<path d="M1216.8 78.8 H1224.0 L1220.4 83.0 Z" fill="#111"/>
<path d="M1231.3 70 V90" stroke="#cdcdcd" stroke-width="1"/><path d="M1232.3 70 V90" stroke="#fbfbfb" stroke-width="1"/>
<defs><radialGradient id="gi" cx=".4" cy=".3" r=".8"><stop offset="0" stop-color="#5aa2ea"/><stop offset="1" stop-color="#1556b0"/></radialGradient></defs>
<circle cx="1248.4" cy="80.3" r="8.8" fill="url(#gi)" stroke="#1b5fb8" stroke-width=".8"/>
<text x="1248.4" y="85.6" font-family="Liberation Serif" font-size="14.5" font-weight="700" font-style="normal" fill="#fff" text-anchor="middle">i</text>
<path d="M1265.8 70 V90" stroke="#cdcdcd" stroke-width="1"/><path d="M1266.8 70 V90" stroke="#fbfbfb" stroke-width="1"/>
<path d="M1274.5 72.5 h6.5 l1.8 1.8 h8 v11.7 h-16.3 z" fill="#f8e07a" stroke="#d9ae2c" stroke-width="1"/><path d="M1275 77 h15.5 v8.5 h-15.5 z" fill="#f5d352"/>
<circle cx="1287.8" cy="85.2" r="4.9" fill="#1e9e1e" stroke="#117a11" stroke-width=".6"/><path d="M1285 85.2 H1290.6 M1287.8 82.4 V88" stroke="#fff" stroke-width="1.6"/>
<rect x="1680.5" y="40" width="14" height="19.5" fill="#e6e6e6"/>
<path d="M1683.9 47.8 H1691.1 L1687.5 52.0 Z" fill="#111"/>
<rect x="1703.5" y="41.8" width="16" height="16" rx="2.2" fill="#f1f1f1" stroke="#6a6a6a" stroke-width="1.6"/><path d="M1706.8 50 L1710 53.5 L1716.2 45.5" fill="none" stroke="#222" stroke-width="1.8"/>
<rect x="1731" y="41.8" width="16" height="16" rx="2.2" fill="#f6f6f6" stroke="#7a7a7a" stroke-width="1.6"/>
<path d="M1754.2 48.5 H1761.4 L1757.8 52.7 Z" fill="#111"/>
<rect x="359.7" y="128.2" width="17" height="16.4" rx="1.8" fill="#f0f0f0" stroke="#8a8a8a" stroke-width="1.5"/>
<path d="M362.2 136.6 L368.2 130.8 L374.2 136.6 H372.4 V142 H369.6 V138.4 H366.8 V142 H364 V136.6 Z" fill="#2b2b2b"/>
<rect x="385.2" y="128.2" width="17" height="16.4" rx="1.8" fill="#f0f0f0" stroke="#8a8a8a" stroke-width="1.5"/>
<path d="M397 132 V141.4 L389.5 136.7 Z" fill="#333"/>
<rect x="410.7" y="128.2" width="17" height="16.4" rx="1.8" fill="#f0f0f0" stroke="#c2c2c2" stroke-width="1.5"/>
<path d="M415.5 132 V141.4 L423 136.7 Z" fill="#b0b0b0"/>
<rect x="435.5" y="128.2" width="17" height="16.4" rx="1.8" fill="#f0f0f0" stroke="#8a8a8a" stroke-width="1.5"/>
<text x="444.0" y="141.8" font-family="Liberation Sans" font-size="13.5" font-weight="700" font-style="normal" fill="#222" text-anchor="middle">H</text>
<path d="M462.0 126 V147" stroke="#cdcdcd" stroke-width="1"/><path d="M463.0 126 V147" stroke="#fbfbfb" stroke-width="1"/>
<rect x="481.5" y="128.5" width="16" height="11" rx="1" fill="#cfe4fb" stroke="#7a9cc8" stroke-width="1.2"/><rect x="484" y="130.5" width="11" height="7" fill="#6ea6ea"/><path d="M488 134 l2.5 -2.5 l2.5 2.5" stroke="#1d4fa8" stroke-width="1.4" fill="none"/>
<path d="M489.5 139.5 V143" stroke="#999" stroke-width="1.2"/><rect x="486" y="142" width="7" height="3.6" rx="1" fill="#f2c23a" stroke="#c8962a" stroke-width=".7"/><path d="M482 144 H486 M493 144 H497" stroke="#aaa" stroke-width="1.2"/>
<rect x="508.5" y="128.5" width="12" height="16" rx="1" fill="#eef4fc" stroke="#55606e" stroke-width="1.5"/><rect x="513.2" y="128.5" width="4.6" height="11" fill="#e2452a"/><path d="M510.3 129 V144" stroke="#55606e" stroke-width="1.2"/>
<circle cx="519.3" cy="141.3" r="4.7" fill="#21a521" stroke="#148014" stroke-width=".6"/><path d="M516.6 141.3 H522 M519.3 138.6 V144" stroke="#fff" stroke-width="1.5"/>
<g transform="translate(540.4 137.2) scale(1.0)" fill="#4a4a4a"><path d="M-8.5 8 L-6.5 -3 L-4.8 -7.5 H-1.6 L-1 -3 V8 Z"/><path d="M8.5 8 L6.5 -3 L4.8 -7.5 H1.6 L1 -3 V8 Z"/><rect x="-2" y="-2.5" width="4" height="4.5"/><rect x="-5.6" y="-9" width="3.6" height="2.2"/><rect x="2" y="-9" width="3.6" height="2.2"/></g>
<path d="M557.5 126 V147" stroke="#cdcdcd" stroke-width="1"/><path d="M558.5 126 V147" stroke="#fbfbfb" stroke-width="1"/>
<rect x="1745" y="96" width="26" height="827" fill="#e2e2e2"/>
<path d="M1771 100.5 H1752 Q1748 100.5 1748 104.5 V193 Q1748 197 1752 197 H1771 Z" fill="#ebebeb" stroke="#c9c9c9" stroke-width="1"/>
<path d="M1771 199.5 H1752 Q1748 199.5 1748 203.5 V317.5 Q1748 321.5 1752 321.5 H1771 Z" fill="#ebebeb" stroke="#c9c9c9" stroke-width="1"/>
<path d="M1771 324 H1752 Q1748 324 1748 328 V459 Q1748 463 1752 463 H1771 Z" fill="#ebebeb" stroke="#c9c9c9" stroke-width="1"/>
<g transform="translate(1759.6 113.2) scale(0.98)" fill="#555"><path d="M-8.5 8 L-6.5 -3 L-4.8 -7.5 H-1.6 L-1 -3 V8 Z"/><path d="M8.5 8 L6.5 -3 L4.8 -7.5 H1.6 L1 -3 V8 Z"/><rect x="-2" y="-2.5" width="4" height="4.5"/><rect x="-5.6" y="-9" width="3.6" height="2.2"/><rect x="2" y="-9" width="3.6" height="2.2"/></g>
<rect x="1751.2" y="202.5" width="16.5" height="17" fill="#ffffff" stroke="#8a8a8a" stroke-width="1"/><rect x="1751.2" y="213" width="16.5" height="6.5" fill="#d9ecf8"/><path d="M1757.5 202.5 h6 v11.5 l-3 -2.6 l-3 2.6 z" fill="#ea4a1f"/><path d="M1751.6 202.5 V219.5" stroke="#444" stroke-width="1.6"/>
<rect x="1752" y="326.5" width="15" height="10.5" rx="1" fill="#cfe4fb" stroke="#7a9cc8" stroke-width="1.1"/><rect x="1754.2" y="328.4" width="10.6" height="6.6" fill="#6ea6ea"/><path d="M1757.5 332 l2.3 -2.3 l2.3 2.3" stroke="#1d4fa8" stroke-width="1.3" fill="none"/><path d="M1759.5 337 V340" stroke="#999" stroke-width="1.1"/><rect x="1756.3" y="339.3" width="6.4" height="3.4" rx="1" fill="#f2c23a" stroke="#c8962a" stroke-width=".7"/><path d="M1752 341 H1756 M1763 341 H1767" stroke="#aaa" stroke-width="1.1"/>
<path d="M897 101.5 H902.5 M898.2 101.5 V107 M901.3 101.5 V107 M896 107.3 H903.8 M899.8 107.6 V112" stroke="#fff" stroke-width="1.3" fill="none"/>
<defs><linearGradient id="gy" x1="0" y1="0" x2="0" y2="1"><stop offset="0" stop-color="#fffbc8"/><stop offset="1" stop-color="#fdf06a"/></linearGradient><linearGradient id="gb" x1="0" y1="0" x2="0" y2="1"><stop offset="0" stop-color="#7fc0ee"/><stop offset="1" stop-color="#1f6fd0"/></linearGradient></defs>
<rect x="345" y="9.2" width="15.6" height="16.2" rx="2.6" fill="url(#gy)" stroke="#2f5e9e" stroke-width="2.1"/><rect x="348.3" y="17.3" width="3.2" height="4.6" fill="url(#gb)"/><rect x="353" y="12.8" width="3.3" height="9.1" fill="url(#gb)"/>
<rect x="1670" y="14.5" width="9.5" height="2.6" fill="#222"/>
<rect x="1700.7" y="8.8" width="10.3" height="7.7" fill="none" stroke="#222" stroke-width="1.4"/><rect x="1700" y="8.1" width="11.7" height="2.6" fill="#222"/>
<path d="M1742.2 8.8 L1751.4 17.4 M1751.4 8.8 L1742.2 17.4" stroke="#fff" stroke-width="2"/>
<rect x="1766" y="939" width="2" height="2" fill="#bdbdbd"/>
<rect x="1762" y="939" width="2" height="2" fill="#bdbdbd"/>
<rect x="1758" y="939" width="2" height="2" fill="#bdbdbd"/>
<rect x="1766" y="935" width="2" height="2" fill="#bdbdbd"/>
<rect x="1762" y="935" width="2" height="2" fill="#bdbdbd"/>
<rect x="1766" y="931" width="2" height="2" fill="#bdbdbd"/>
<path d="M344.5 895.5 V919 Q344.5 920.5 346 920.5 H457.5 Q459.3 920.5 459.3 919 V895.5" fill="#fff" stroke="#b9b9b9" stroke-width="1"/><rect x="345" y="893.5" width="113.8" height="3" fill="#fff"/>
<rect x="349" y="899" width="15.5" height="15.5" rx="1.5" fill="#fdfdfd" stroke="#8a8a8a" stroke-width="1.3"/><path d="M352 903 H353.8 M355.5 903 H361.8 M352 906.8 H353.8 M355.5 906.8 H361.8 M352 910.5 H353.8 M355.5 910.5 H361.8" stroke="#333" stroke-width="1.5"/>
<path d="M466.5 899.5 h5.5 l1.5 1.5 h5 v8.5 h-12 z" fill="#f9e489" stroke="#e0bc4a" stroke-width="1"/><path d="M469.5 903.5 h5 l1.5 1.5 h5.5 v9 h-12 z" fill="#fae591" stroke="#e0bc4a" stroke-width="1"/><path d="M470 908 h11 v6 h-11 z" fill="#f7d65e" opacity=".7"/></svg>
<div class="t vt" style="left:1737.1px;top:146.0px;width:44.4px">Search</div>
<div class="t vt" style="left:1724.3px;top:258.0px;width:70px">Bookmarks</div>
<div class="t vt" style="left:1716.5px;top:389.0px;width:85.6px">Data Updates</div>
<div class="t" style="left:368.6px;top:902px;font-size:12.8px;color:#111">Data Directory</div>
<div class="t" style="left:486px;top:902px;font-size:12.8px;color:#9a9a9a">Folders</div>
<!--/ICONS-->
<!--ANNOT-->
<svg class="abs" style="left:0;top:0" width="2000" height="953" viewBox="0 0 2000 953">
<rect x="352.4" y="171.4" width="526.6" height="637.5" rx="88" ry="88" fill="none" stroke="#1f3864" stroke-width="8.2"/>
<polygon points="278.4,98.9 330.5,89.4 331.9,97.2 353.8,80.8 327.5,73.1 328.9,81.0 276.8,90.6" fill="#1f3864"/>
<polygon points="275.2,443.0 328.2,479.6 323.7,486.2 350.8,490.0 337.6,466.0 333.0,472.6 280.0,436.0" fill="#1f3864"/>
<polygon points="1816.1,426.7 1535.5,377.9 1536.8,370.0 1510.6,377.9 1532.6,394.2 1534.0,386.3 1814.7,435.1" fill="#1f3864"/>
<polygon points="1815.7,788.2 1615.6,765.6 1616.5,757.7 1590.8,767.1 1613.8,782.0 1614.7,774.1 1814.7,796.6" fill="#1f3864"/>
</svg>
<div class="t an" style="left:128.9px;top:55.0px;transform:scaleX(0.9828)">Barra de</div>
<div class="t an" style="left:46.6px;top:102.2px;transform:scaleX(1.0251)">herramientas</div>
<div class="t an" style="left:100.9px;top:399.7px;transform:scaleX(1.0151)">Directorio</div>
<div class="t an" style="left:121.0px;top:447.0px;transform:scaleX(0.9725)">de series</div>
<div class="t an" style="left:1828.5px;top:414.7px;transform:scaleX(1.0104)">Área del</div>
<div class="t an" style="left:1828.5px;top:462.0px;transform:scaleX(0.9772)">gráfico</div>
<div class="t an" style="left:1828.4px;top:737.6px;transform:scaleX(1.0035)">Tabla de</div>
<div class="t an" style="left:1828.4px;top:785.2px;transform:scaleX(1.0194)">datos</div>
<!--/ANNOT-->
</body>
</html>
